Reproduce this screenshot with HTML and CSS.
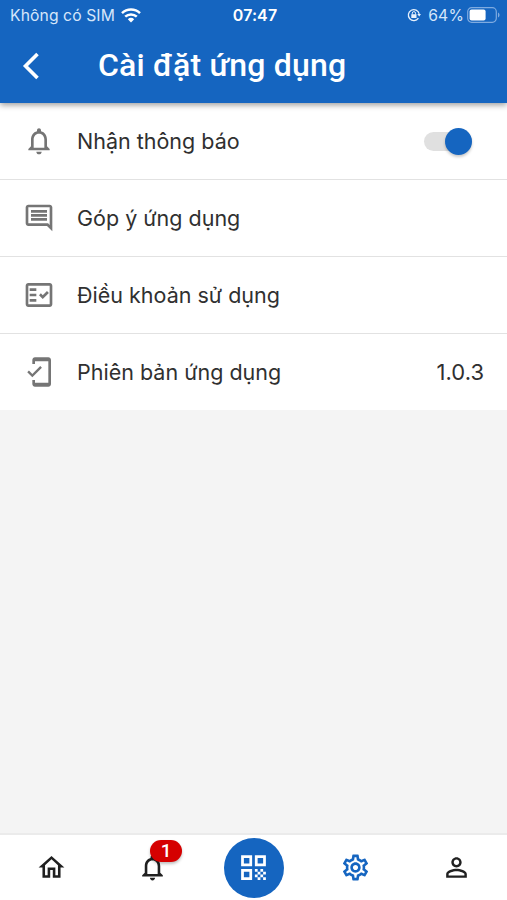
FILE: index.html
```html
<!DOCTYPE html>
<html lang="vi">
<head>
<meta charset="utf-8">
<title>Cài đặt ứng dụng</title>
<link rel="stylesheet" href="styles.css">
</head>
<body>
<header class="header">
  <div class="status">
    <div class="status-left">
      <span class="carrier">Không có SIM</span>
      <svg class="wifi" viewBox="0 0 20 15"><g fill="none" stroke="#fff" stroke-width="2.5"><path d="M1 5.2a13 13 0 0 1 18 0"/><path d="M4.2 8.7a8.4 8.4 0 0 1 11.6 0"/></g><path fill="#fff" d="M6.8 11.3a4.7 4.7 0 0 1 6.4 0L10 14.5z"/></svg>
    </div>
    <span class="clock">07:47</span>
    <div class="status-right">
      <svg class="lock" viewBox="0 0 14 14"><path fill="none" stroke="#e6f0fc" stroke-width="1.3" d="M12.2 5.8A5.5 5.5 0 1 0 11.4 10.2"/><path fill="#e6f0fc" d="M10.300 6h3.700l-1.800 2.600zM4.300 6.300h5.200v3.600H4.300z"/><path fill="none" stroke="#e6f0fc" d="M5.300 6.500V5.200a1.600 1.600 0 0 1 3.200 0v1.300"/></svg>
      <span class="percent">64%</span>
      <svg class="battery" viewBox="0 0 33 16"><rect x=".7" y=".7" width="28.600" height="14.600" rx="4" fill="none" stroke="#7fabe0" stroke-width="1.2"/><rect x="2.600" y="2.600" width="16" height="10.800" rx="2" fill="#fff"/><path fill="#7fabe0" d="M31 5.500c2 .8 2 4.200 0 5z"/></svg>
    </div>
  </div>
  <div class="titlebar">
    <svg class="back" viewBox="0 0 18 28"><path d="M15.500 2L3.500 14l12 12" fill="none" stroke="#fff" stroke-width="3.600"/></svg>
    <h1 class="title">Cài đặt ứng dụng</h1>
  </div>
</header>
<main class="list">
  <div class="row">
    <svg class="icon" viewBox="0 0 24 24"><path d="M12 22c1.100 0 2-.9 2-2h-4c0 1.100.9 2 2 2zm6-6v-5c0-3.070-1.630-5.640-4.500-6.320V4c0-.83-.67-1.500-1.500-1.500s-1.500.67-1.500 1.500v.68C7.640 5.360 6 7.920 6 11v5l-2 2v1h16v-1l-2-2zm-2 1H8v-6c0-2.480 1.510-4.500 4-4.500s4 2.020 4 4.500v6z"/></svg>
    <span class="label">Nhận thông báo</span>
    <span class="switch"><span class="knob"></span></span>
  </div>
  <div class="row">
    <svg class="icon" viewBox="0 0 24 24"><path d="M21.990 4c0-1.100-.89-2-1.990-2H4c-1.100 0-2 .9-2 2v12c0 1.100.9 2 2 2h14l4 4-.01-18zM20 4v13.170L18.830 16H4V4h16zM6 12h12v2H6zm0-3h12v2H6zm0-3h12v2H6z"/></svg>
    <span class="label">Góp ý ứng dụng</span>
  </div>
  <div class="row">
    <svg class="icon" viewBox="0 0 24 24"><path fill-rule="evenodd" d="M20 3H4c-1.100 0-2 .9-2 2v14c0 1.100.9 2 2 2h16c1.100 0 2-.9 2-2V5c0-1.100-.9-2-2-2zm0 16H4V5h16v14z"/><path d="M19.410 10.420L17.990 9l-3.170 3.170-1.410-1.420L12 12.160 14.820 15zM5 7h5v2H5zM5 11h5v2H5zM5 15h5v2H5z"/></svg>
    <span class="label">Điều khoản sử dụng</span>
  </div>
  <div class="row">
    <svg class="icon" viewBox="0 0 24 24"><path d="M19 1H9c-1.100 0-2 .9-2 2v3h2V4h10v16H9v-2H7v3c0 1.100.9 2 2 2h10c1.100 0 2-.9 2-2V3c0-1.100-.9-2-2-2zM7.010 13.470l-2.550-2.550-1.270 1.270L7 16l7.190-7.190-1.270-1.270z"/></svg>
    <span class="label">Phiên bản ứng dụng</span>
    <span class="version">1.0.3</span>
  </div>
</main>
<nav class="nav">
  <div class="tab"><svg class="nav-icon" viewBox="0 0 24 24"><path d="M12 5.690l5 4.500V18h-2v-6H9v6H7v-7.810l5-4.500M12 3L2 12h3v8h6v-6h2v6h6v-8h3L12 3z"/></svg></div>
  <div class="tab"><svg class="nav-icon" viewBox="0 0 24 24"><path d="M12 22c1.100 0 2-.9 2-2h-4c0 1.100.9 2 2 2zm6-6v-5c0-3.070-1.630-5.640-4.500-6.320V4c0-.83-.67-1.500-1.500-1.500s-1.500.67-1.500 1.500v.68C7.640 5.360 6 7.920 6 11v5l-2 2v1h16v-1l-2-2zm-2 1H8v-6c0-2.480 1.510-4.500 4-4.500s4 2.020 4 4.500v6z"/></svg><span class="badge">1</span></div>
  <div class="tab"><span class="scan"><svg class="qr" viewBox="0 0 24 24"><path d="M3 11h8V3H3v8zm2-6h4v4H5V5zM3 21h8v-8H3v8zm2-6h4v4H5v-4zM13 3v8h8V3h-8zm6 6h-4V5h4v4zM19 19h2v2h-2zM13 13h2v2h-2zM15 15h2v2h-2zM13 17h2v2h-2zM15 19h2v2h-2zM17 17h2v2h-2zM17 13h2v2h-2zM19 15h2v2h-2z"/></svg></span></div>
  <div class="tab"><svg class="nav-icon active" viewBox="0 0 24 24"><path d="M19.430 12.980c.04-.32.07-.64.07-.98 0-.34-.03-.66-.07-.98l2.110-1.650c.19-.15.24-.42.12-.64l-2-3.460c-.09-.16-.26-.25-.44-.25-.06 0-.12.01-.17.03l-2.490 1c-.52-.4-1.080-.73-1.690-.98l-.38-2.650C14.460 2.180 14.250 2 14 2h-4c-.25 0-.46.18-.49.42l-.38 2.650c-.61.25-1.170.59-1.690.98l-2.490-1c-.06-.02-.12-.03-.18-.03-.17 0-.34.09-.43.25l-2 3.460c-.13.22-.07.49.12.64l2.110 1.650c-.04.32-.07.65-.07.98 0 .33.03.66.07.98l-2.110 1.650c-.19.15-.24.42-.12.64l2 3.460c.09.16.26.25.44.25.06 0 .12-.01.17-.03l2.490-1c.52.4 1.080.73 1.690.98l.38 2.650c.03.24.24.42.49.42h4c.25 0 .46-.18.49-.42l.38-2.650c.61-.25 1.170-.59 1.690-.98l2.490 1c.06.02.12.03.18.03.17 0 .34-.09.43-.25l2-3.460c.12-.22.07-.49-.12-.64l-2.110-1.650zm-1.980-1.710c.04.31.05.52.05.73 0 .21-.02.43-.05.73l-.14 1.130.89.7 1.080.84-.7 1.210-1.270-.51-1.040-.42-.9.68c-.43.32-.84.56-1.250.73l-1.060.43-.16 1.130-.2 1.350h-1.400l-.19-1.350-.16-1.130-1.060-.43c-.43-.18-.83-.41-1.230-.71l-.91-.7-1.060.43-1.270.51-.7-1.210 1.080-.84.89-.7-.14-1.130c-.03-.31-.05-.54-.05-.74s.02-.43.05-.73l.14-1.130-.89-.7-1.080-.84.7-1.210 1.270.51 1.040.42.9-.68c.43-.32.84-.56 1.250-.73l1.060-.43.16-1.130.2-1.350h1.390l.19 1.350.16 1.130 1.060.43c.43.18.83.41 1.230.71l.91.7 1.060-.43 1.270-.51.7 1.210-1.070.85-.89.7.14 1.130zM12 8c-2.210 0-4 1.790-4 4s1.790 4 4 4 4-1.790 4-4-1.790-4-4-4zm0 6c-1.100 0-2-.9-2-2s.9-2 2-2 2 .9 2 2-.9 2-2 2z"/></svg></div>
  <div class="tab"><svg class="nav-icon" viewBox="0 0 24 24"><path d="M12 5.900c1.160 0 2.100.94 2.100 2.100s-.94 2.100-2.100 2.100S9.900 9.160 9.900 8s.94-2.100 2.100-2.100m0 9c2.970 0 6.100 1.460 6.100 2.100v1.100H5.900V17c0-.64 3.130-2.100 6.100-2.100M12 4C9.790 4 8 5.790 8 8s1.790 4 4 4 4-1.790 4-4-1.790-4-4-4zm0 9c-2.670 0-8 1.340-8 4v3h16v-3c0-2.660-5.330-4-8-4z"/></svg></div>
</nav>
</body>
</html>
```
FILE: styles.css
```css
* { box-sizing: border-box; }
body {
  margin: 0;
  height: 900px;
  display: flex;
  flex-direction: column;
  background: #f4f4f4;
  font-family: Inter, sans-serif;
  color: #303030;
  overflow: hidden;
}
svg { display: block; flex: none; }
.header {
  height: 103px;
  flex: none;
  background: #1565c0;
  color: #fff;
  box-shadow: 0 2px 6px rgba(0, 0, 0, .4);
  position: relative;
  z-index: 1;
}
.status {
  height: 30px;
  display: grid;
  grid-template-columns: 1fr auto 1fr;
  align-items: center;
  padding: 0 7px 0 10px;
  white-space: nowrap;
}
.status-left, .status-right { display: flex; align-items: center; }
.status-right { justify-content: flex-end; }
.carrier { font-size: 15.7px; letter-spacing: .1px; color: #d5e6fa; }
.wifi { width: 20px; height: 15px; margin-left: 6px; }
.clock { font-size: 16px; font-weight: 600; letter-spacing: .1px; }
.lock { width: 14px; height: 14px; margin-right: 7px; }
.percent { font-size: 15.7px; letter-spacing: .2px; color: #d5e6fa; }
.battery { width: 33px; height: 16px; margin-left: 3px; }
.titlebar { height: 73px; display: flex; align-items: center; padding: 0 0 2px 22px; }
.back { width: 18px; height: 28px; }
.title { margin: 0 0 2px 58px; font: 500 32px/40px Roboto, sans-serif; letter-spacing: .2px; white-space: nowrap; }
.list { background: #fff; flex: none; }
.row {
  height: 77px;
  display: flex;
  align-items: center;
  padding: 0 23px;
  border-bottom: 1.500px solid #e2e2e2;
}
.row:last-child { height: 76px; border-bottom: 0; }
.icon { width: 32px; height: 32px; fill: #757575; }
.label { margin-left: 22px; font-size: 21.5px; line-height: 30px; white-space: nowrap; }
.version { margin-left: auto; font-size: 22px; }
.switch {
  width: 48px;
  height: 19px;
  margin: 0 12px 0 auto;
  border-radius: 10px;
  background: #e0e0e0;
  position: relative;
}
.knob {
  position: absolute;
  right: 0;
  top: -4px;
  width: 27px;
  height: 27px;
  border-radius: 50%;
  background: #1565c0;
  box-shadow: 0 2px 3px rgba(0, 0, 0, .22);
}
.nav {
  height: 67px;
  margin-top: auto;
  flex: none;
  display: grid;
  grid-template-columns: repeat(5, 1fr);
  padding-left: 1px;
  background: #fff;
  border-top: 2px solid #ebebeb;
}
.tab { display: flex; align-items: center; justify-content: center; position: relative; }
.nav-icon { width: 31px; height: 31px; fill: #202020; }
.nav-icon.active { fill: #1565c0; }
.scan {
  width: 60px;
  height: 60px;
  border-radius: 50%;
  background: #1565c0;
  display: flex;
  align-items: center;
  justify-content: center;
}
.qr { width: 33px; height: 33px; fill: #fff; }
.badge {
  position: absolute;
  left: 48px;
  top: 5px;
  width: 32px;
  height: 22px;
  border-radius: 11px;
  background: #d50000;
  color: #fff;
  font: 500 19px/22px Roboto, sans-serif;
  text-align: center;
  box-shadow: 0 2px 3px rgba(0, 0, 0, .25);
}
```
